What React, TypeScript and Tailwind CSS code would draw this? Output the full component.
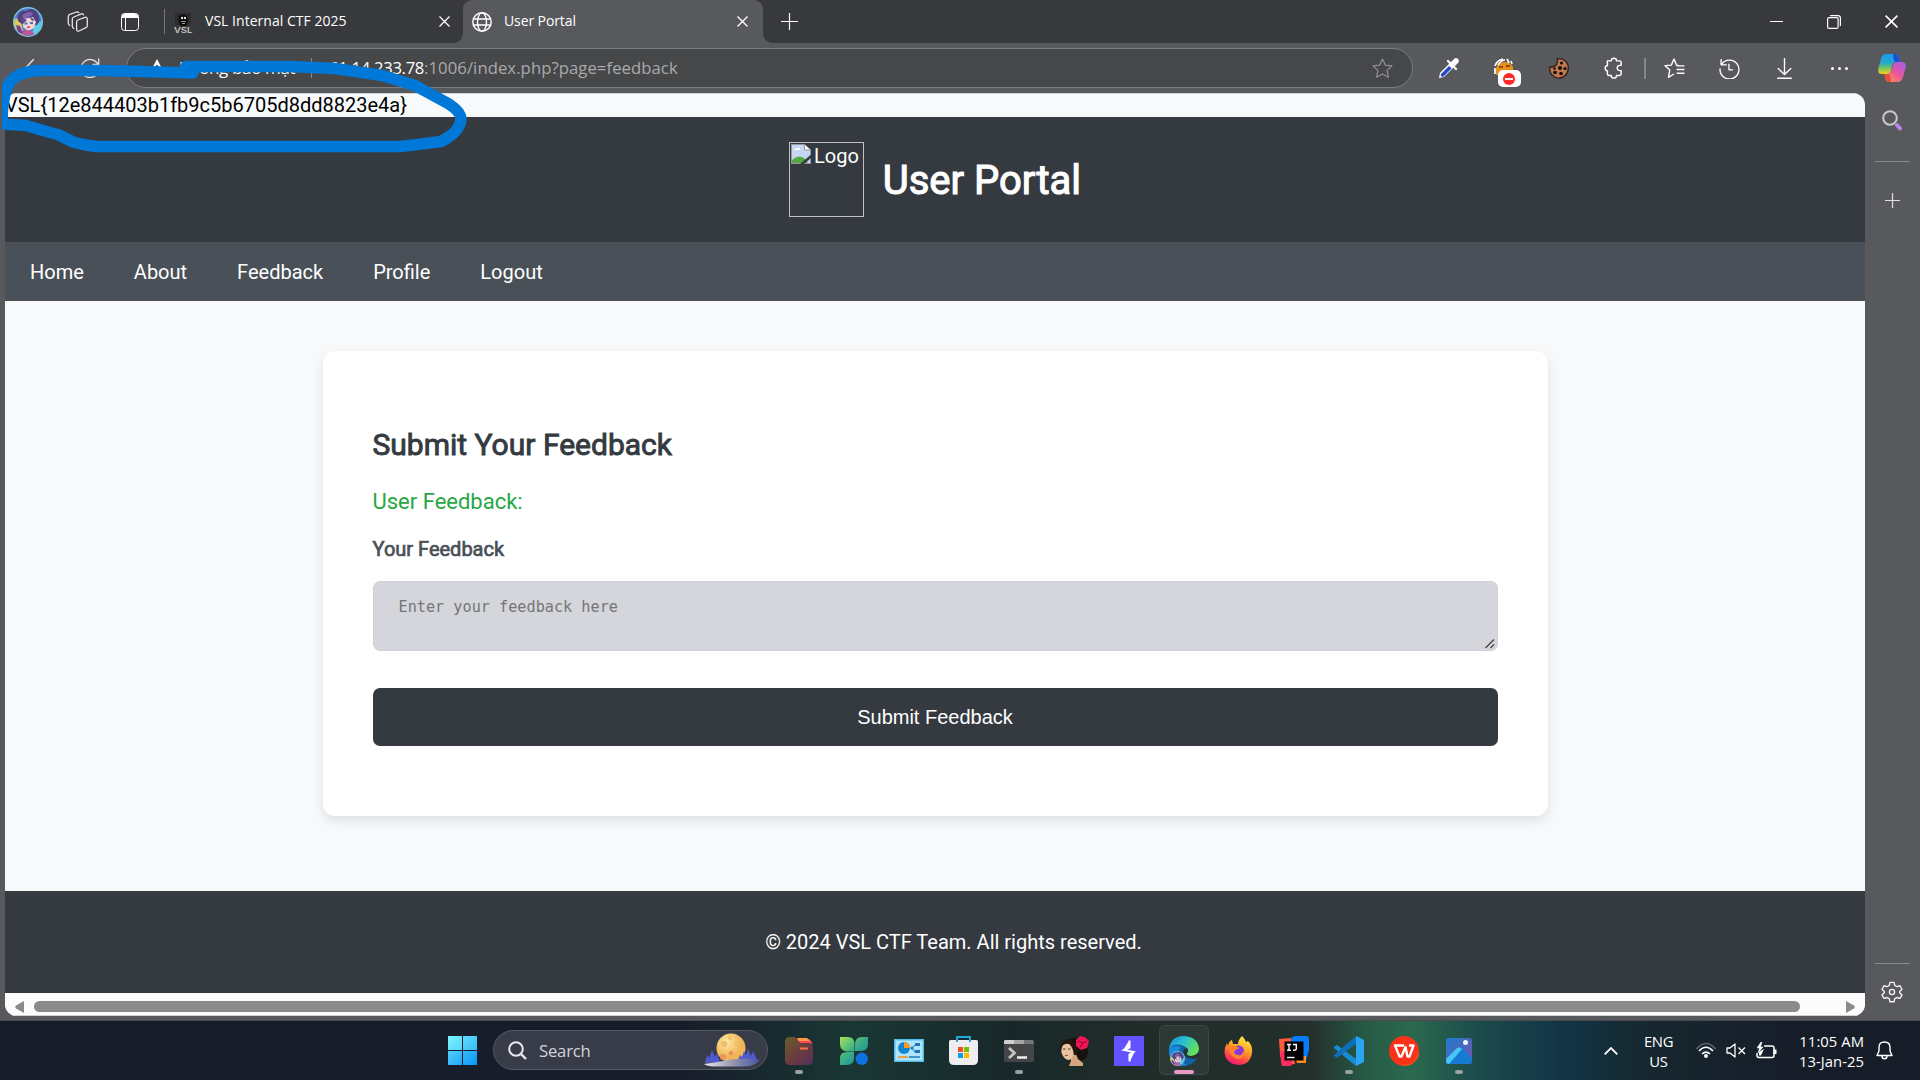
import React from "react";

const ui = "font-['Open_Sans','Noto_Sans',sans-serif]";

function Cell({ w = "w-[55px]", children }: { w?: string; children?: React.ReactNode }) {
  return <div className={`${w} h-full shrink-0 flex items-center justify-center`}>{children}</div>;
}

function Line({ size = 20, children, color = "#fff", sw = 1.3 }: { size?: number; children: React.ReactNode; color?: string; sw?: number }) {
  return (
    <svg width={size} height={size} viewBox="0 0 20 20" fill="none" stroke={color} strokeWidth={sw} strokeLinecap="round" strokeLinejoin="round" className="shrink-0">
      {children}
    </svg>
  );
}

function Avatar({ size }: { size: number }) {
  return (
    <svg width={size} height={size} viewBox="0 0 30 30" className="shrink-0">
      <defs>
        <clipPath id={`av${size}`}><circle cx="15" cy="15" r="13.800" /></clipPath>
      </defs>
      <circle cx="15" cy="15" r="15" fill="#79cdea" />
      <g clipPath={`url(#av${size})`}>
        <rect width="30" height="30" fill="#4f7fd0" />
        <path d="M0 12 8 11 9 20 12 30H0Z" fill="#d9cf5a" />
        <path d="M21 20 30 12V30H18Z" fill="#62cbe6" />
        <path d="M5 14C3 7 8 3 13 4 17 0 25 2 25 8c3 3 1 8-1 10L9 17Z" fill="#54407f" />
        <path d="M9 9Q14 3 20 6L18 9 11 12Z" fill="#7d62ae" />
        <path d="M10 12 20 10 23 15 21 21 15 24 10 20Z" fill="#f2d3da" />
        <path d="M8 10 14 13 10 17ZM16 9 22 13 19 14Z" fill="#5f4790" />
        <path d="M11.500 16.500h3M17 16h3" stroke="#3d78b8" strokeWidth="1.800" />
        <path d="M14 20.500 17 20" stroke="#d0405a" strokeWidth="1.300" />
        <path d="M8 24 14 23 19 24 22 28 20 30H8Z" fill="#b95a96" />
        <path d="M3 18 7 19 10 26 5 26Z" fill="#74409c" />
      </g>
    </svg>
  );
}

function CloseX({ size = 11 }: { size?: number }) {
  return (
    <svg width={size} height={size} viewBox="0 0 11 11" stroke="#fff" strokeWidth="1.3" className="shrink-0">
      <path d="M.5.5 10.500 10.500M10.500.5.5 10.500" />
    </svg>
  );
}

function TabBar() {
  return (
    <div className={`h-[43px] bg-[#38393c] flex items-center text-white text-[14px] ${ui}`}>
      <div className="w-[463px] h-full flex items-center">
        <div className="ml-[13px] w-[30px]"><Avatar size={30} /></div>
        <div className="ml-[24px] w-[22px]">
          <svg width="22" height="22" viewBox="0 0 22 22" fill="none" stroke="#e4e4e4" strokeWidth="1.300" strokeLinecap="round" strokeLinejoin="round">
            <path d="M10.800 9 18 6.300Q20 5.800 20.300 7.800V14.500Q20.300 16 19 16.600L12 20Q9.600 20.700 9.600 18.300V10.800Q9.600 9.400 10.800 9Z" />
            <path d="M6.800 17.500Q5.300 16.800 5.300 15V8Q5.300 6.500 6.800 6L14.500 2.800Q16 2.400 16.500 3.800" />
            <path d="M2.800 14.500Q1.300 14 1.300 12.300V5.500Q1.300 4 2.800 3.400L9.500 1Q11 .6 11.800 1.800" />
          </svg>
        </div>
        <div className="ml-[32px] w-[18px] h-[18px] border-[1.5px] border-white rounded-[3.500px] flex flex-col overflow-hidden">
          <div className="h-[4px] bg-white" />
          <div className="w-[4px] flex-1 border-r border-white" />
        </div>
        <div className="ml-[25px] w-px h-[25px] bg-[#77787b]" />
        <div className="ml-[9px] w-[19px] h-[20px] flex flex-col items-center mt-[2px]">
          <svg width="19" height="20" viewBox="0 0 19 20">
            <rect x="1" y="0" width="16" height="12" rx="2" fill="#2b2c2e" />
            <path d="M5 3Q9 0 13 3L14 9 12 13H7L4.500 9Z" fill="#0b0b0b" />
            <circle cx="8" cy="5" r="1.200" fill="#ddd" /><circle cx="11" cy="5" r="1.200" fill="#ddd" />
            <path d="M7 8.500H12M8 10.500H11" stroke="#999" />
            <text x="0" y="19.500" fontSize="7" fontWeight="500" fill="#d5d5d5" textLength="18.500" lengthAdjust="spacingAndGlyphs" fontFamily="Inter, sans-serif">VSL</text>
          </svg>
        </div>
        <div className="ml-[12px] flex-1 whitespace-nowrap tracking-[0.03px] mt-[-2px]">VSL Internal CTF 2025</div>
        <div className="mr-[13px]"><CloseX /></div>
      </div>
      <div className="relative w-[300px] h-full bg-[#58595d] rounded-t-[9px] flex items-center">
        <div className="absolute left-[-9px] bottom-0 w-[9px] h-[9px] bg-[radial-gradient(circle_at_0_0,#38393c_8.500px,#58595d_9px)]" />
        <div className="absolute right-[-9px] bottom-0 w-[9px] h-[9px] bg-[radial-gradient(circle_at_100%_0,#38393c_8.500px,#58595d_9px)]" />
        <div className="ml-[9px]">
          <Line size={20} sw={1.4}>
            <circle cx="10" cy="10" r="9.200" /><ellipse cx="10" cy="10" rx="4.500" ry="9.200" /><path d="M1.500 7H18.500M1.500 13H18.500" />
          </Line>
        </div>
        <div className="ml-[12px] flex-1 tracking-[-0.1px] mt-[-2px]">User Portal</div>
        <div className="mr-[15px]"><CloseX /></div>
      </div>
      <svg width="17" height="17" viewBox="0 0 17 17" stroke="#fff" strokeWidth="1.200" className="ml-[18px]"><path d="M0 8.500H17M8.500 0V17" /></svg>
      <div className="ml-auto h-full flex">
        <Cell w="w-[57px]"><div className="w-[13px] h-px bg-white" /></Cell>
        <Cell w="w-[57px]">
          <svg width="14" height="14" viewBox="0 0 14 14" fill="none" stroke="#fff" strokeWidth="1.200"><rect x=".6" y="2.600" width="10.500" height="10.800" rx="1.500" /><path d="M3 .6H11Q13.400.6 13.400 3V11" /></svg>
        </Cell>
        <Cell w="w-[58px]"><CloseX size={13} /></Cell>
      </div>
    </div>
  );
}

function Toolbar() {
  return (
    <div className={`h-[50px] flex items-center ${ui}`}>
      <div className="ml-[23px] w-[20px]"><Line size={20} color="#e6e6e6"><path d="M18 10H2.500M10.500 1.500 2.500 10 10.500 18" /></Line></div>
      <div className="ml-[37px] w-[20px]"><Line size={20} color="#e6e6e6"><path d="M18.700 1V6.500H13M18 6.300A9 9 0 1 0 19 11" /></Line></div>
      <div className="ml-[26px] w-[1287px] h-[40px] rounded-full border border-[#7c7d80] bg-[#464749] flex items-center whitespace-nowrap">
        <svg width="18" height="18" viewBox="0 0 18 18" className="ml-[21px]"><path d="M9 0 18 17H0Z" fill="#fff" /><path d="M9 6V11M9 13V15" stroke="#464749" strokeWidth="1.800" /></svg>
        <div className="ml-[13px] w-[119px] text-white text-[17px] tracking-[-0.35px]">Không bảo mật</div>
        <div className="ml-[13px] w-px h-[20px] bg-[#88898b]" />
        <div className="ml-[17px] flex-1 text-[#a9aaac] text-[16.700px] tracking-[0.06px]"><span className="text-white tracking-[-0.33px]">61.14.233.78</span>:1006/index.php?page=feedback</div>
        <div className="mr-[19px]">
          <Line size={21} color="#8f9092" sw={1.2}><path d="M10 1 12.700 6.800 19 7.500 14.400 11.800 15.600 18.300 10 15.200 4.400 18.300 5.600 11.800 1 7.500 7.300 6.800Z" /></Line>
        </div>
      </div>
      <div className="ml-[8px] flex h-full">
        <Cell>
          <svg width="22" height="22" viewBox="0 0 22 22"><path d="M1 21 2 16 12.500 5.500 16.500 9.500 6 20Z" fill="#fff" /><path d="M4.500 18 12 10.500" stroke="#2848c4" strokeWidth="3.500" strokeLinecap="round" /><path d="M10 4 18 12" stroke="#fff" strokeWidth="2.400" strokeLinecap="round" /><path d="M14 8 18 4" stroke="#fff" strokeWidth="5.500" strokeLinecap="round" /></svg>
        </Cell>
        <Cell>
          <div className="relative w-[20px] h-[20px]">
            <svg width="20" height="20" viewBox="0 0 20 20"><path d="M2 10Q4 4 10 4 16 4 19 9L19 17H2Z" fill="#e8901e" /><path d="M1 8Q3 2 9 1M4 7Q7 2 11 2M13 1 15 5M17 3 18 6M1 10V16" stroke="#fff" strokeWidth="1.700" fill="none" /><path d="M5 9H9M12 8H16" stroke="#6b3908" strokeWidth="1.500" /></svg>
            <div className="absolute left-[4px] top-[12px] w-[23px] h-[17px] bg-white rounded-[5px] flex items-center justify-center">
              <div className="w-[12px] h-[12px] rounded-full bg-[#ff2b2b] flex items-center justify-center"><div className="w-[8px] h-[2px] bg-white" /></div>
            </div>
          </div>
        </Cell>
        <Cell>
          <svg width="20" height="21" viewBox="0 0 20 21"><path d="M8 1Q16-.5 19 7 20.500 15 14 19 8 22 3 17 0 14 .8 9 3 10 5 8 8 8 8 5 9 3 8 1Z" fill="#bf7950" stroke="#38241a" strokeWidth="1.400" /><g fill="#150d09"><circle cx="12.500" cy="5" r="1.600" /><circle cx="11" cy="10" r="2" /><circle cx="16" cy="10.500" r="1.600" /><circle cx="6" cy="14.500" r="1.800" /><circle cx="12" cy="15.500" r="1.800" /><circle cx="5.500" cy="10.500" r="1.200" /></g></svg>
        </Cell>
        <Cell>
          <Line size={22} sw={1.3}><path d="M4 3.500H7.500A2.400 2.400 0 0 1 12.300 3.500H15Q16.500 3.500 16.500 5V7.600H15.300A2.400 2.400 0 0 0 15.300 12.400H16.500V15.300Q16.500 16.800 15 16.800H12.300A2.400 2.400 0 0 1 7.500 16.800H5.500Q4 16.800 4 15.300V12.600A2.500 2.500 0 0 1 4 7.700Z" /></Line>
        </Cell>
      </div>
      <div className="ml-[3px] w-[2px] h-[21px] bg-[#85868a]" />
      <div className="ml-[1px] flex h-full">
        <Cell><Line size={21}><path d="M12 6.800 9.500 1 7 6.800 1 7.300 5.500 11.500 4.200 18.500 9 15.500M12 6.800 13.500 7M12.500 7.500H19M12.500 11H19M12.500 14.500H19" /></Line></Cell>
        <Cell><Line size={21}><path d="M2 1.500V6.500H7M2.500 6A9 9 0 1 1 1 10.500M9.500 6V11.300H13" /></Line></Cell>
        <Cell><Line size={21}><path d="M10 .5V15.500M4 10 10 15.800 16 10M3.500 19.300H16.500" /></Line></Cell>
        <Cell><div className="flex gap-[4px]"><i className="w-[3px] h-[3px] rounded-full bg-white" /><i className="w-[3px] h-[3px] rounded-full bg-white" /><i className="w-[3px] h-[3px] rounded-full bg-white" /></div></Cell>
      </div>
      <svg width="28" height="28" viewBox="0 0 28 28" className="ml-[11px]">
        <defs>
          <linearGradient id="cpA" x1="0" y1="0" x2="0" y2="1"><stop offset="0" stopColor="#1a9ded" /><stop offset=".45" stopColor="#25a9c8" /><stop offset=".72" stopColor="#7cc75a" /><stop offset="1" stopColor="#f0d01c" /></linearGradient>
          <linearGradient id="cpB" x1="1" y1="0" x2=".2" y2="1"><stop offset="0" stopColor="#a45cf2" /><stop offset=".55" stopColor="#e8559c" /><stop offset="1" stopColor="#ff9253" /></linearGradient>
        </defs>
        <path d="M8 0H17Q20 0 21 4L22 8H18Q15 8 14 12L12.500 18Q11.500 20 9 20H4Q-1 20 .5 14L3 5Q4.500 0 8 0Z" fill="url(#cpA)" />
        <path d="M15 0H17Q20 0 21 4L22 8H18Q16 8 15.500 5Z" fill="#1c4fd6" />
        <path d="M20 28H11Q8 28 7.400 24L6.500 20H9Q12 20 13.500 16L15.500 10Q16.500 8 19 8H24Q29 8 27.500 14L25 23Q23.500 28 20 28Z" fill="url(#cpB)" />
        <path d="M13 28H11Q8 28 7.400 24L6.500 20H9Q12 20 12.500 23Z" fill="#ec4b3b" />
      </svg>
    </div>
  );
}

const links = ["Home", "About", "Feedback", "Profile", "Logout"];

function Page() {
  return (
    <div className="w-[1860px] h-[923px] rounded-[12px] overflow-hidden bg-[#f8f9fb] flex flex-col font-[Roboto,sans-serif] text-[20px]">
      <div className="h-[24px] leading-[22px] text-black border-t border-[#d4d6d9]">{"VSL{12e844403b1fb9c5b6705d8dd8823e4a}"}</div>
      <header className="h-[125px] shrink-0 bg-[#343a40] text-white flex items-center justify-center gap-[18.750px]">
        <div className="w-[75px] h-[75px] border border-[#c0c0c0] flex items-start pt-px pl-px">
          <svg width="20" height="20" viewBox="0 0 20 20" className="shrink-0">
            <path d="M.5.5H13.500L19.500 6V19.500H.5Z" fill="#c6d7f5" stroke="#9a9a9a" />
            <path d="M13.500.5V6H19.500" fill="#fff" stroke="#9a9a9a" />
            <path d="M3 6Q4 3.500 6 4.500 8 2 9.500 6Z" fill="#fff" />
            <path d="M1 19V16Q7 10 13 14L17 19Z" fill="#53a93f" />
            <path d="M9 20 20 10.500V14L13 20Z" fill="#343a40" />
          </svg>
          <span className="ml-[3px] leading-[24px]">Logo</span>
        </div>
        <h1 className="pt-[2px] text-[40px] leading-[48px] [-webkit-text-stroke:1.100px_#fff]">User Portal</h1>
      </header>
      <nav className="h-[59px] shrink-0 bg-[#495057] text-white flex items-center gap-[50px] px-[25px]">
        {links.map((l) => <a key={l} className="leading-[24px]">{l}</a>)}
      </nav>
      <main className="h-[590px] shrink-0 flex justify-center items-start pt-[50px]">
        <section className="w-[1225px] h-[465px] bg-white rounded-[12px] shadow-[0_5px_12px_rgba(0,0,0,0.1)] px-[50px] pt-[76px] flex flex-col">
          <h2 className="text-[30px] leading-[36px] text-[#343a40] [-webkit-text-stroke:0.900px_#343a40]">Submit Your Feedback</h2>
          <p className="mt-[25px] h-[27px] leading-[27px] text-[22px] text-[#28a745]">User Feedback:</p>
          <label className="mt-[22px] h-[24px] leading-[24px] text-[#495057] [-webkit-text-stroke:0.700px_#495057]">Your Feedback</label>
          <div className="relative mt-[20px] h-[70px] shrink-0 rounded-[7px] bg-[#d4d6db] border border-[#ced2d8] pl-[25px] pt-[15px] leading-[20px] font-['DejaVu_Sans_Mono',monospace] text-[15.200px] text-[#757575]">
            Enter your feedback here
            <svg width="10" height="10" viewBox="0 0 10 10" className="absolute right-[2px] bottom-[1px]" stroke="#454545" strokeWidth="1.300"><path d="M.5 9 9 .5M5.500 9 9 5.500" /></svg>
          </div>
          <button className="mt-[37px] h-[58px] shrink-0 rounded-[7px] bg-[#343a40] text-white font-['Liberation_Sans',sans-serif]">Submit Feedback</button>
        </section>
      </main>
      <footer className="h-[102px] shrink-0 bg-[#343a40] text-white flex items-center justify-center pl-[37px]">© 2024 VSL CTF Team. All rights reserved.</footer>
      <div className="h-[23px] shrink-0 bg-[#fcfcfc] border-b border-[#d0d0d0] flex items-center pt-[5px] px-[10px]">
        <svg width="9" height="12" viewBox="0 0 9 12" fill="#8a8a8a"><path d="M9 0V12L1 7.500Q-.5 6 1 4.500Z" /></svg>
        <div className="ml-[10px] w-[1766px] h-[11px] rounded-full bg-[#8a8a8a]" />
        <svg width="9" height="12" viewBox="0 0 9 12" fill="#8a8a8a" className="ml-auto"><path d="M0 0V12L8 7.500Q9.500 6 8 4.500Z" /></svg>
      </div>
    </div>
  );
}

function Sidebar() {
  return (
    <aside className="w-[55px] h-full flex flex-col items-center pr-px">
      <svg width="20" height="21" viewBox="0 0 20 21" fill="none" className="mt-[17px]"><circle cx="8" cy="8" r="6.800" stroke="#c9c9c9" strokeWidth="2" /><path d="M15 15 18 18.500" stroke="#b884ee" strokeWidth="4" strokeLinecap="round" /></svg>
      <div className="mt-[30px] w-[35px] h-px bg-[#87888b]" />
      <svg width="15" height="15" viewBox="0 0 15 15" stroke="#e0e0e0" strokeWidth="1.200" className="mt-[31px]"><path d="M0 7.500H15M7.500 0V15" /></svg>
      <div className="mt-auto w-[35px] h-px bg-[#87888b]" />
      <Gear />
    </aside>
  );
}

function Gear() {
  return (
    <svg width="22" height="22" viewBox="0 0 24 24" fill="none" stroke="#f2f2f2" strokeWidth="1.500" strokeLinejoin="round" className="mt-[17px] mb-[17px]">
      <path d="M9.800 1.500H14.200L15 4.900 17.300 6.200 20.700 5.200 22.900 9 20.400 11.400V12.900L22.900 15.300 20.700 19 17.300 18 15 19.300 14.200 22.700H9.800L9 19.300 6.700 18 3.300 19 1.100 15.300 3.600 12.900V11.400L1.100 9 3.300 5.200 6.700 6.200 9 4.900Z" />
      <circle cx="12" cy="12" r="2.800" />
    </svg>
  );
}

function TaskApp({ children, dot, active }: { children: React.ReactNode; dot?: boolean; active?: boolean }) {
  return (
    <div className="relative w-[55px] h-full flex items-center justify-center shrink-0">
      {active && <div className="absolute left-[3px] top-[4px] w-[50px] h-[50px] rounded-[6px] bg-white/6 border border-white/8" />}
      <div className="relative flex">{children}</div>
      {dot && <div className="absolute left-[24px] top-[49px] w-[8px] h-[4px] rounded-full bg-[#98a19f]" />}
      {active && <div className="absolute left-[18px] top-[49px] w-[20px] h-[4px] rounded-full bg-[#e79cc4]" />}
    </div>
  );
}

function Taskbar() {
  return (
    <div className={`h-[59px] flex bg-[linear-gradient(90deg,#171d2a_0,#171d2a_680px,#18282f_760px,#1a3734_850px,#18282a_1010px,#1f2c29_1120px,#232f2b_1310px,#275946_1365px,#2b694f_1410px,#1b4b4b_1480px,#123546_1560px,#17272f_1650px,#161d29_1800px)] text-white ${ui}`}>
      <div className="w-[448px] shrink-0" />
      <div className="w-[29px] h-[29px] mt-[15px] grid grid-cols-2 gap-px shrink-0">
        <i className="bg-[linear-gradient(135deg,#7af5ff,#55d5fb)]" /><i className="bg-[linear-gradient(135deg,#62dafc,#36bcf9)]" /><i className="bg-[linear-gradient(135deg,#51d0fc,#22a6f8)]" /><i className="bg-[linear-gradient(135deg,#38bdfa,#0a94fb)]" />
      </div>
      <div className="ml-[16px] mt-[9px] w-[275px] h-[40px] shrink-0 rounded-full bg-[#383c48] border border-[#555964] flex items-center">
        <svg width="19" height="19" viewBox="0 0 19 19" fill="none" stroke="#e8e9eb" strokeWidth="2" className="ml-[14px]"><circle cx="8" cy="8" r="6.800" /><path d="M12.800 12.800 18 18" strokeWidth="2.400" /></svg>
        <span className="ml-[12px] mt-[1px] text-[16.700px] tracking-[-0.2px] text-[#d3d5d8] flex-1">Search</span>
        <svg width="56" height="34" viewBox="0 0 56 34" className="mr-[7px]">
          <defs><radialGradient id="moon" cx=".35" cy=".3"><stop offset="0" stopColor="#ffe9a6" /><stop offset="1" stopColor="#f1b558" /></radialGradient><linearGradient id="hill"><stop offset="0" stopColor="#e9e9ee" /><stop offset=".5" stopColor="#969ab0" /><stop offset="1" stopColor="#4851a4" /></linearGradient></defs>
          <circle cx="27" cy="15" r="14.500" fill="url(#moon)" />
          <g fill="#ecc269"><circle cx="20" cy="11" r="3.300" /><circle cx="33" cy="10" r="2.300" /><circle cx="26" cy="5" r="2" /></g>
          <g fill="#e9935e"><circle cx="27" cy="20" r="2.300" /><circle cx="19" cy="24" r="3" /></g>
          <path d="M1 30 3 22 5 25 8 17 11 24 13 20 16 29ZM34 27 36 22 38 24 40 18 42 22 44 16 47 23 49 18 52 25 55 28Z" fill="#4e5ad0" />
          <path d="M0 31Q14 29 24 27 42 24 56 27 50 34 40 33.500H10Q3 33 0 31Z" fill="url(#hill)" />
        </svg>
      </div>
      <div className="ml-[3px] flex shrink-0 h-full">
        <TaskApp dot>
          <svg width="28" height="28" viewBox="0 0 28 28"><defs><linearGradient id="fo" x1="0" y1="0" x2="1" y2="1"><stop offset="0" stopColor="#67602c" /><stop offset=".5" stopColor="#6c3c3c" /><stop offset="1" stopColor="#55305a" /></linearGradient></defs><path d="M12 2H24L27 5V12H12Z" fill="#f5485b" /><path d="M12 1H22L25 4H14Z" fill="#ff9d3c" /><path d="M5 0H10L15 6H24Q28 6 28 10V22Q28 28 23 28H5Q0 28 0 23V5Q0 0 5 0Z" fill="url(#fo)" /><path d="M15 11.500H23" stroke="#ff704b" strokeWidth="2" /></svg>
        </TaskApp>
        <TaskApp>
          <svg width="28" height="28" viewBox="0 0 28 28"><defs><linearGradient id="cl" gradientUnits="userSpaceOnUse" x1="0" y1="0" x2="24" y2="24"><stop offset="0" stopColor="#a4e65a" /><stop offset=".5" stopColor="#3fb083" /><stop offset="1" stopColor="#168b9d" /></linearGradient></defs><g fill="url(#cl)"><path d="M0 0H8Q14.500 0 14.500 7V14.500H7Q0 14 0 7Z" /><path d="M28 0V7Q28 14 21 14H15V8Q15 0 22 0Z" /><path d="M0 28V21Q0 15 7 15H14V21Q14 28 7 28Z" /></g><circle cx="21.800" cy="21.800" r="6.200" fill="#0b72de" /></svg>
        </TaskApp>
        <TaskApp>
          <svg width="30" height="23" viewBox="0 0 30 23"><rect width="30" height="23" fill="#55bdf0" /><rect x="1.500" y="1.500" width="27" height="20" fill="#afe5fb" /><circle cx="10" cy="9" r="6" fill="#1584d2" /><path d="M10 9V3A6 6 0 0 1 16 9Z" fill="#ff9a1f" /><path d="M18 9 21 6H25M18 9 21 13H25" stroke="#1975bd" fill="none" /><g fill="#1975bd"><circle cx="18" cy="9" r="1.500" /><rect x="21" y="4" width="5" height="3" /><rect x="21" y="11" width="5" height="3" /></g><path d="M4 18H14" stroke="#f28c1c" strokeWidth="1.500" /><path d="M15 18H26" stroke="#1778c6" strokeWidth="1.500" /></svg>
        </TaskApp>
        <TaskApp>
          <svg width="29" height="29" viewBox="0 0 29 29"><path d="M8 7V1H21V7" stroke="#22a9dc" strokeWidth="2" fill="none" /><path d="M0 5.500Q0 4 1.500 4H27.500Q29 4 29 5.500V24Q29 29 24 29H5Q0 29 0 24Z" fill="#eeeeee" /><path d="M8 4V6M21 4V6" stroke="#22a9dc" strokeWidth="2" /><path d="M9 11h5v5H9Z" fill="#f25022" /><path d="M15 11h5v5h-5Z" fill="#7fba00" /><path d="M9 17h5v5H9Z" fill="#0a9ee8" /><path d="M15 17h5v5h-5Z" fill="#ffb900" /></svg>
        </TaskApp>
        <TaskApp dot>
          <svg width="30" height="22" viewBox="0 0 30 22"><rect width="30" height="22" rx="1.500" fill="#444546" /><path d="M1 0H10V4H0V1Z" fill="#cfcfcf" /><path d="M10 0H20V4H10Z" fill="#a5a5a5" /><path d="M20 0H29L30 4H20Z" fill="#777" /><path d="M5 8 10.500 13 5 18" stroke="#c5c5c5" strokeWidth="2.800" fill="none" /><path d="M13 17.500H23" stroke="#eee" strokeWidth="2.500" /></svg>
        </TaskApp>
        <TaskApp>
          <svg width="30" height="30" viewBox="0 0 30 30">
            <path d="M2 9Q4 3 11 3 15 0 20 4 28 6 29 14 29 22 24 24 20 25 16 22L8 12Z" fill="#17100f" />
            <path d="M10 18H17L19 23 24 27V30H10L12 25Z" fill="#d3a67e" />
            <path d="M3 9Q7 5 12 7 16 11 15 17 13 24 9 24 5 23 3 18 1 13 3 9Z" fill="#e8c5a0" />
            <path d="M1 14Q1 5 8 3 15 3 17 10L18 19 15 19Q14 11 10 8 5 7 3 11L2 16Z" fill="#24150f" />
            <path d="M4 13H6.500M9 13H11.500" stroke="#553226" strokeWidth="1.200" />
            <path d="M6 19.500H9" stroke="#b34a44" strokeWidth="1.200" />
            <path d="M17 4 21 0 26 1 30 5 28 12 22 14 17 10Z" fill="#ee1756" />
            <path d="M19 5 24 7 28 5M21 11 24 7" stroke="#a90934" strokeWidth="1.300" fill="none" />
          </svg>
        </TaskApp>
        <TaskApp>
          <svg width="30" height="30" viewBox="0 0 30 30"><rect width="30" height="30" fill="#6352ff" /><path d="M15.500 4.500V11.500L10 14 19.500 16 15.500 18.500V25.500" stroke="#fff" strokeWidth="2" fill="none" /><path d="M14.800 5 9.500 13.500 15 11.500ZM16 25 20.500 16 15.500 18.500Z" fill="#fff" /></svg>
        </TaskApp>
        <TaskApp active>
          <svg width="30" height="30" viewBox="0 0 30 30"><defs><linearGradient id="ed" x1="0" y1="0" x2="1" y2=".5"><stop offset="0" stopColor="#1788d2" /><stop offset=".5" stopColor="#29c1d0" /><stop offset="1" stopColor="#68de59" /></linearGradient></defs><circle cx="15" cy="15" r="15" fill="#1260a8" /><path d="M0 14Q1 0 15 0 29 1 30 13 29 20 22 20 17 20 18 17 20 15 18 12 12 7 5 9 2 10 0 14Z" fill="url(#ed)" /><path d="M18 17Q17 20 22 20 26 20 30 16L30 20 28 22.500 24 23 Q15 22 14 16Q15 12 18 12 20 15 18 17Z" fill="#263333" /><path d="M0 14Q4 8 12 11 7 17 10 23 13 28 19 29 9 32 3 24 0 20 0 14Z" fill="#178bdd" /></svg>
          <div className="absolute left-px bottom-0"><Avatar size={15} /></div>
        </TaskApp>
        <TaskApp>
          <svg width="29" height="29" viewBox="0 0 29 29"><defs><linearGradient id="ff" x1=".7" y1="0" x2=".3" y2="1"><stop offset="0" stopColor="#fff04a" /><stop offset=".45" stopColor="#ff9b24" /><stop offset=".8" stopColor="#ff3750" /><stop offset="1" stopColor="#e91984" /></linearGradient></defs><path d="M18 0Q21 3 22 6L24 5Q29 10 28 17 26 29 14.500 29 2 28 .5 17 0 12 3 7L4 10Q5 5 8 4L9 8 14 8Q14 4 18 0Z" fill="url(#ff)" /><circle cx="14.500" cy="15" r="5.500" fill="#8438df" /><path d="M4 12Q9 8 13 11L16 12 11 14 10 17Q13 20 17 19L20 15Q20 22 14 23 6 21 4 12Z" fill="#ff852d" /></svg>
        </TaskApp>
        <TaskApp>
          <svg width="30" height="30" viewBox="0 0 30 30"><path d="M0 3 12 2 16 28 3 30 1 18Z" fill="#ff5a3c" /><path d="M1 14 14 20 12 30H3Z" fill="#ff2b62" /><path d="M12 2 16 0H28L30 2V14L27 24H14Z" fill="#087cfa" /><path d="M16 20H27V27H18Z" fill="#ff8b22" /><rect x="5.500" y="5.500" width="19" height="19" fill="#000" /><path d="M8 8.500H12M10 8.500V14M8 14.200H12M14 8.500H17.300V13Q17 14.500 14 14.200" stroke="#fff" strokeWidth="1.400" fill="none" /><path d="M8 21.500H15.500" stroke="#fff" strokeWidth="1.400" /></svg>
        </TaskApp>
        <TaskApp dot>
          <svg width="30" height="30" viewBox="0 0 30 30"><path d="M22 23 3 9 0 11V12L22 30Z" fill="#178cda" /><path d="M0 19 22 0V8L3 22 0 20Z" fill="#0e6fb8" /><path d="M22 0 30 4V26L22 30Z" fill="#2ba5f3" /></svg>
        </TaskApp>
        <TaskApp>
          <svg width="30" height="30" viewBox="0 0 30 30"><circle cx="15" cy="15" r="15" fill="#fa3218" /><path d="M5 24Q14 32 25 26L30 16V20Q26 30 15 30Z" fill="#ff6417" opacity=".6" /><path d="M15 9.500H6L10.500 20.500H12.500L16.500 11 18.500 20.500H20.500L24.500 9.500H20" stroke="#fff" strokeWidth="2.300" fill="none" strokeLinejoin="round" /></svg>
        </TaskApp>
        <TaskApp dot>
          <svg width="26" height="26" viewBox="0 0 26 26"><defs><linearGradient id="ph" x1="0" y1="0" x2="1" y2="1"><stop offset="0" stopColor="#1d7bd0" /><stop offset="1" stopColor="#7752a7" /></linearGradient></defs><rect width="26" height="26" rx="3" fill="url(#ph)" /><path d="M0 21 11 10Q13.500 8 16 10L26 20V23Q26 26 23 26H3Q0 26 0 23Z" fill="#157bd2" /><path d="M0 21 11 10Q13.500 8 16 11L3 26Q0 26 0 23Z" fill="#44c6f7" /><circle cx="19.500" cy="4.500" r="2.500" fill="#eef4fb" /></svg>
        </TaskApp>
      </div>
      <div className="flex-1 flex items-center justify-end pr-[27px] text-[14.800px] leading-[20px]">
        <svg width="14" height="8" viewBox="0 0 14 8" fill="none" stroke="#fff" strokeWidth="1.800" className="mt-px"><path d="M.7 7.300 7 1 13.300 7.300" /></svg>
        <div className="ml-[25px] w-[31px] flex flex-col items-center tracking-[-0.3px]"><span>ENG</span><span>US</span></div>
        <svg width="20" height="17" viewBox="0 0 20 17" fill="none" strokeWidth="1.700" className="ml-[22px]"><path d="M.5 7Q10-4 19.500 7" stroke="#5d6369" /><path d="M3 9Q10 1.500 17 9M6 12Q10 8 14 12" stroke="#fff" /><circle cx="10" cy="14" r="2" fill="#fff" /></svg>
        <svg width="20" height="15" viewBox="0 0 20 15" fill="none" stroke="#fff" strokeWidth="1.300" className="ml-[10px]"><path d="M1 5H4L9 1V14L4 10H1ZM12.500 4.500 19 11M19 4.500 12.500 11" strokeLinejoin="round" /></svg>
        <svg width="21" height="18" viewBox="0 0 21 18" fill="none" stroke="#fff" strokeWidth="1.500" className="ml-[10px]"><path d="M8 4H16Q18 4 18 6V13.500Q18 15.500 16 15.500H3Q1 15.500 1 13.500V11" /><path d="M19 7.500V12" strokeWidth="3" /><path d="M5 0 1 6H3.500L2 11 7 5H4.500L6 0Z" fill="#fff" strokeWidth=".5" /><path d="M3 13.500V10L8 7 5 13.500Z" fill="#fff" stroke="none" /></svg>
        <div className="ml-[20px] w-[67px] flex flex-col items-end whitespace-nowrap tracking-[0.05px]"><span>11:05 AM</span><span>13-Jan-25</span></div>
        <svg width="17" height="19" viewBox="0 0 17 19" fill="none" stroke="#fff" strokeWidth="1.400" strokeLinejoin="round" className="ml-[12px]"><path d="M1 14.500 3 10V6.500Q3 1 8.500 1 14 1 14 6.500V10L16 14.500ZM6 15Q6 17.800 8.500 17.800 11 17.800 11 15" /></svg>
      </div>
    </div>
  );
}

function Marker() {
  return (
    <svg width="478" height="110" viewBox="2 50 478 110" className="absolute left-[2px] top-[50px] overflow-hidden pointer-events-none" fill="none" stroke="#0078d7" strokeWidth="11.500" strokeLinecap="round" strokeLinejoin="round">
      <path d="M193 73 160 72 100 70.500H38Q18 72 10 82 2 95 2 124L26 125.500 38 129 50 132.500 58 134.500 73 142 83 144.500 96 146.500H400L418 144.500 441 141.500Q460 132 461 119 461 112 449 104L415 85.500 382 75.500 335 68.500 290 66.500H186" />
    </svg>
  );
}

export default function App() {
  return (
    <div className="relative w-[1920px] h-[1080px] overflow-hidden flex flex-col bg-[#58595d]">
      <TabBar />
      <Toolbar />
      <div className="h-[928px] flex pl-[5px] border-b border-[#4a4b4e]">
        <Page />
        <Sidebar />
      </div>
      <Taskbar />
      <Marker />
    </div>
  );
}
